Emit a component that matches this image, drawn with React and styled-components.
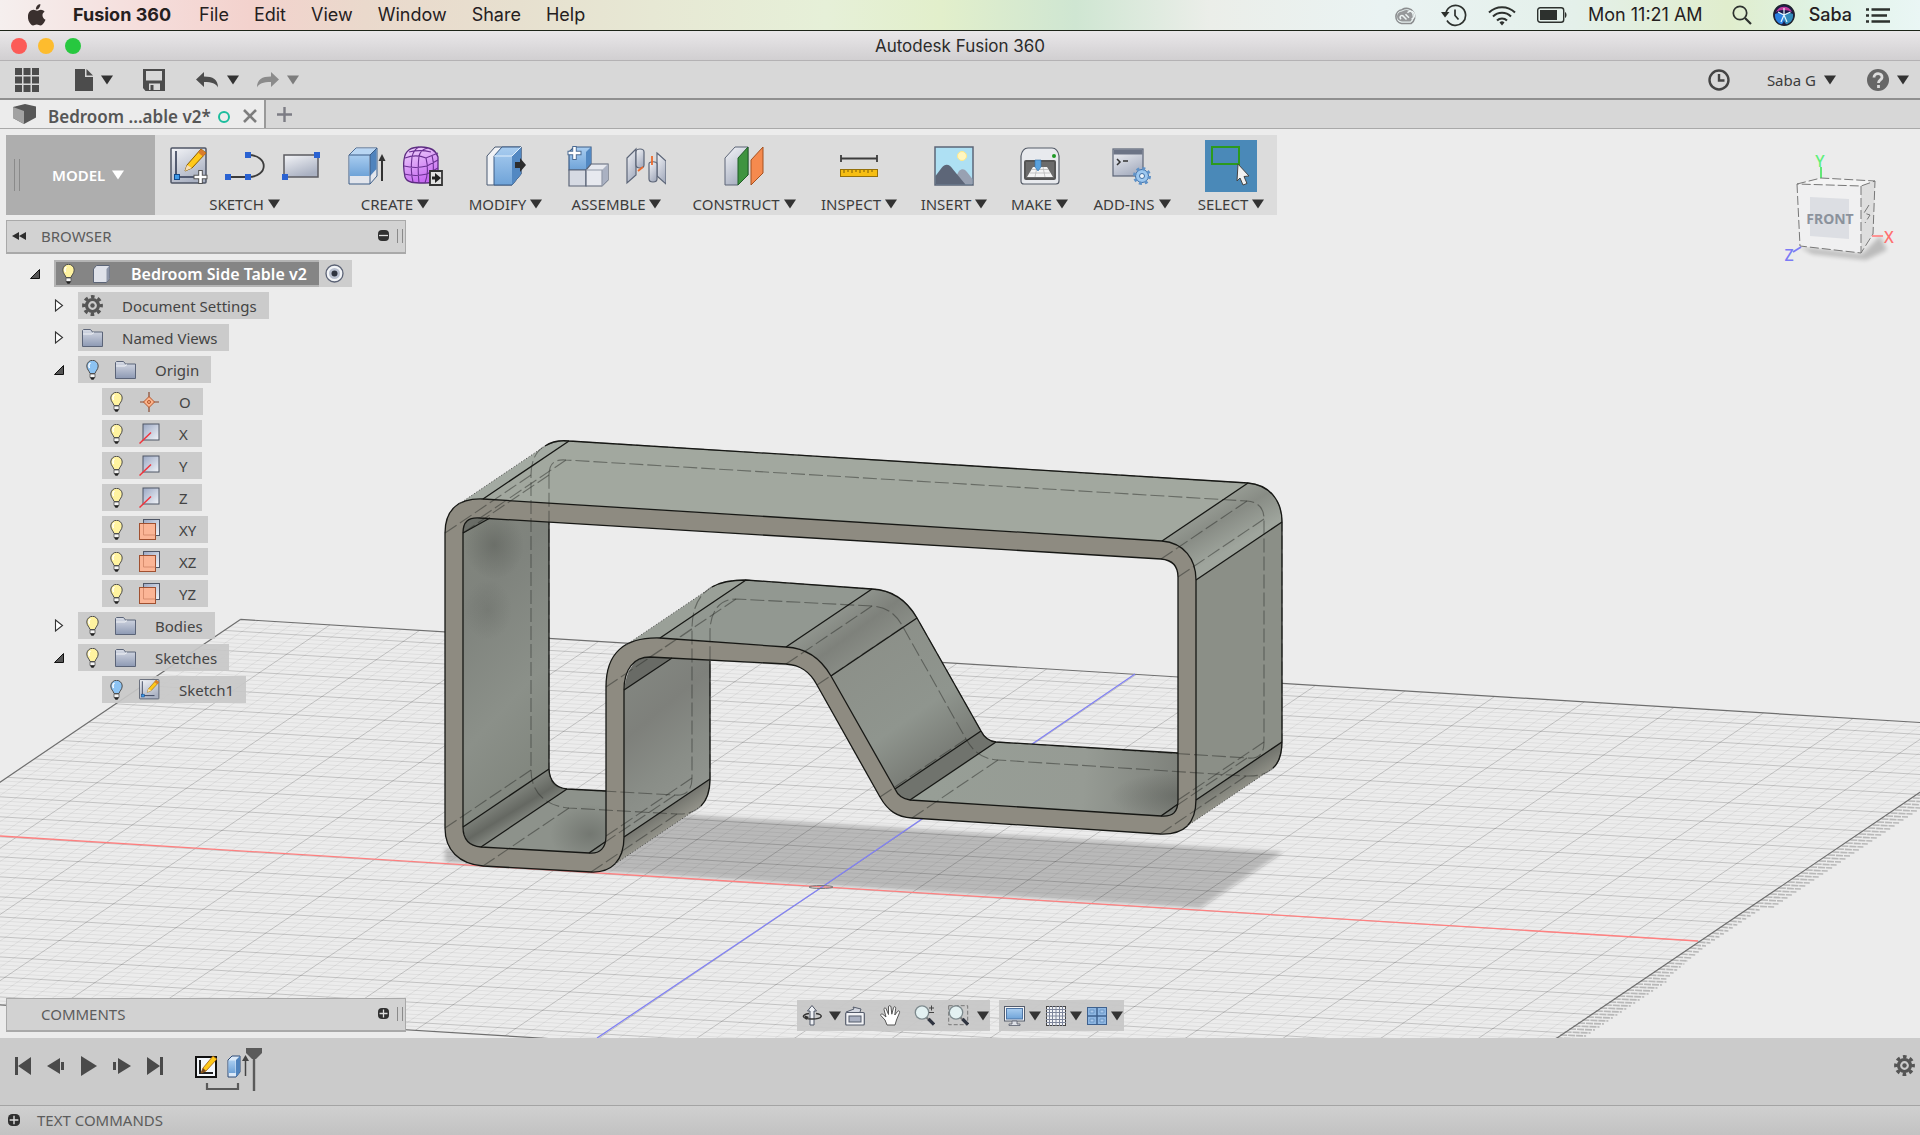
import React from 'react';
import styled, { createGlobalStyle, css } from 'styled-components';

const GlobalStyle = createGlobalStyle`
  * {
    box-sizing: border-box;
  }

  body {
    margin: 0;
    background: #ececec;
    color: #3c3c3c;
    font-family: 'Noto Sans', 'Open Sans', sans-serif;
    font-size: 15px;
  }

  button {
    margin: 0;
    padding: 0;
    border: 0;
    background: none;
    color: inherit;
    font: inherit;
    cursor: pointer;
  }

  ul {
    margin: 0;
    padding: 0;
    list-style: none;
  }

  svg {
    display: block;
    flex: none;
  }
`;

const Shell = styled.div`
  display: flex;
  flex-direction: column;
  height: 100vh;
  overflow: hidden;
`;

/* ---------- system menu bar ---------- */

const MenuBar = styled.nav`
  display: flex;
  align-items: center;
  flex: none;
  height: 31px;
  padding: 0 30px 0 28px;
  border-bottom: 1px solid #1c2418;
  background: linear-gradient(
    90deg,
    #f5efee 0%,
    #f5dcda 8%,
    #f3d2cd 13%,
    #ead9cc 19%,
    #e7e0cf 27%,
    #e7e8d4 34%,
    #e6f0d8 43%,
    #e2efcb 49%,
    #cfe6d2 56%,
    #ebeee9 63%,
    #eaf3f3 72%,
    #e4f0ea 82%,
    #e0edcd 90%,
    #dff3e6 95%,
    #eaf6f5 100%
  );
  color: #25201e;
  font-family: Inter, sans-serif;
  font-size: 18px;
  line-height: 24px;
`;

const MenuItem = styled.button`
  margin-left: ${({ $gap }) => $gap || 25}px;
  font-weight: ${({ $bold }) => ($bold ? 700 : 400)};
`;

const Status = styled.div`
  display: flex;
  align-items: center;
  gap: 21px;
  margin-left: auto;

  time {
    margin-right: 8px;
  }
`;

const StatusPair = styled.div`
  display: flex;
  align-items: center;
  gap: 14px;
  font-weight: 500;
`;

/* ---------- window chrome ---------- */

const TitleBar = styled.header`
  display: grid;
  grid-template-columns: 1fr auto 1fr;
  align-items: center;
  flex: none;
  height: 30px;
  padding: 0 11px;
  border-bottom: 1px solid #b4b2b4;
  background: linear-gradient(#e9e7e9, #d1cfd1);
  color: #2b2b2b;
  font-family: Inter, sans-serif;
  font-size: 17px;
  line-height: 24px;
`;

const Lights = styled.div`
  display: flex;
  gap: 11px;
`;

const Light = styled.button`
  width: 16px;
  height: 16px;
  border-radius: 50%;
  background: ${({ $color }) => $color};
`;

const AppBar = styled.div`
  display: flex;
  align-items: center;
  flex: none;
  height: 39px;
  padding: 0 11px 0 15px;
  border-bottom: 2px solid #8f8f8f;
  background: #d8d8d8;
`;

const BarButton = styled.button`
  display: flex;
  align-items: center;
  gap: 8px;
  margin-right: ${({ $after }) => $after || 0}px;
  color: ${({ $muted }) => ($muted ? '#8b8b8b' : '#3c3c3c')};
  font-size: 15px;
`;

const Spacer = styled.div`
  flex: 1;
`;

const TabStrip = styled.div`
  display: flex;
  flex: none;
  height: 29px;
  border-bottom: 1px solid #a9a9a9;
  background: #d7d7d7;
`;

const Tab = styled.div`
  display: flex;
  align-items: center;
  width: 266px;
  padding-left: 13px;
  border-right: 2px solid #999;
  background: #ececec;
  color: #565656;
  font-size: 17px;
  font-weight: 600;
  line-height: 24px;
  white-space: nowrap;

  span {
    width: 182px;
    padding: 5px 0 0 12px;
  }
`;

const TabDot = styled.i`
  flex: none;
  width: 12px;
  height: 12px;
  margin: 5px 13px 0 0;
  border: 2px solid #1bbd9d;
  border-radius: 50%;
`;

const NewTab = styled.button`
  padding-left: 11px;
`;

/* ---------- viewport ---------- */

const Viewport = styled.main`
  position: relative;
  display: flex;
  flex-direction: column;
  flex: 1;
  min-height: 0;
`;

const Canvas = styled.svg`
  position: absolute;
  inset: 0;
  width: 100%;
  height: 100%;
`;

const Ribbon = styled.div`
  position: relative;
  display: flex;
  align-self: flex-start;
  height: 80px;
  margin: 6px 0 0 6px;
  background: #dcdcdc;
`;

const Workspace = styled.button`
  display: flex;
  align-items: center;
  width: 149px;
  padding-left: 8px;
  background: #aeaeae;
  color: #fff;
  font-size: 15px;
  font-weight: 600;

  span {
    margin: 0 7px 0 32px;
  }
`;

const Grip = styled.i`
  width: 6px;
  height: ${({ $tall }) => ($tall ? 32 : 14)}px;
  border: solid #8a8a8a;
  border-width: 0 1px;
`;

const Section = styled.section`
  position: relative;
  display: flex;
  flex-direction: column;
  align-items: center;
  width: ${({ $width }) => $width}px;
  padding-top: 6px;

  & + &::before {
    content: '';
    position: absolute;
    top: 6px;
    left: 0;
    width: 1px;
    height: 68px;
    background: #b8b8b8;
  }
`;

const Icons = styled.div`
  display: flex;
  align-items: center;
  gap: 17px;
  height: 50px;
`;

const Tool = styled.button`
  ${({ $active }) =>
    $active &&
    css`
      height: 52px;
      padding: 6px;
      background: #4a89b8;
    `}
`;

const Label = styled.button`
  display: flex;
  align-items: center;
  gap: 4px;
  height: 20px;
  margin-top: 3px;
  font-size: 15px;
  line-height: 20px;
  white-space: nowrap;
`;

const Panel = styled.div`
  position: relative;
  display: flex;
  align-items: center;
  flex: none;
  width: 400px;
  height: 34px;
  margin: ${({ $bottom }) => ($bottom ? '0 0 6px 6px' : '5px 0 0 6px')};
  padding: 0 2px 2px 5px;
  border: 1px solid #a9a9a9;
  border-bottom-width: 2px;
  background: #d2d2d2;
  color: #5c5c5c;
  font-size: 15px;

  h2 {
    flex: 1;
    margin: 0 0 0 ${({ $bottom }) => ($bottom ? 29 : 15)}px;
    font: inherit;
  }

  i {
    margin-left: 8px;
  }
`;

const Tree = styled.ul`
  position: relative;
  display: flex;
  flex-direction: column;
  align-items: flex-start;
  gap: 5px;
  padding-top: 6px;
`;

const Row = styled.li`
  display: flex;
  align-items: center;
  height: 27px;
  padding-left: ${({ $level }) => 30 + 24 * $level}px;
`;

const Toggle = styled.span`
  width: 24px;
`;

const Chip = styled.button`
  display: flex;
  align-items: center;
  min-width: 100px;
  height: 27px;
  padding: 0 12px 0 4px;
  background: rgba(200, 200, 200, 0.9);
  color: #444;
  font-size: 15px;
  line-height: 26px;

  svg + svg {
    margin-left: 12px;
  }

  span {
    margin-left: 19px;
  }

  ${({ $root }) =>
    $root &&
    css`
      width: 265px;
      border: 2px solid #b4b4b4;
      border-width: 2px 0 2px 2px;
      padding-left: 2px;
      background: #858585;
      color: #fff;
      font-size: 16px;
      font-weight: 600;
      white-space: nowrap;
    `}
`;

const Eye = styled.button`
  display: grid;
  place-items: center start;
  width: 33px;
  height: 27px;
  padding-left: 6px;
  background: #cdcdcd;
`;

const Dock = styled.div`
  position: relative;
  display: grid;
  grid-template-columns: 1fr auto 1fr;
  align-items: start;
  margin-top: auto;
`;

const NavGroups = styled.div`
  display: flex;
  gap: 9px;
  padding-top: 2px;
`;

const NavGroup = styled.div`
  display: flex;
  align-items: center;
  gap: 4px;
  height: 31px;
  padding: 0 1px 0 5px;
  background: rgba(200, 200, 200, 0.96);
`;

const NavButton = styled.button`
  display: flex;
  align-items: center;
  gap: ${({ $gap }) => $gap || 2}px;
  margin-right: ${({ $after }) => $after || 0}px;
`;

/* ---------- timeline ---------- */

const Timeline = styled.footer`
  display: flex;
  flex: none;
  height: 68px;
  padding: 10px 5px 0 14px;
  border-bottom: 1px solid #a4a4a4;
  background: #cbcbcb;
`;

const Transport = styled.div`
  display: flex;
  gap: 15px;
  height: 36px;
  align-items: center;
  margin-right: 31px;
`;

const Settings = styled.button`
  height: 34px;
`;

const Commands = styled.div`
  display: flex;
  align-items: center;
  flex: none;
  gap: 17px;
  height: 29px;
  padding: 0 8px 2px;
  background: linear-gradient(#d0d0d0, #c2c2c2);
  color: #5c5c5c;
  font-size: 15px;
`;

/* ---------- icons ---------- */

const Caret = ({ fill = '#333', size = 12 }) => (
  <svg width={size} height="10" viewBox="0 0 12 10">
    <path d="M0 0.500h12L6 9.500z" fill={fill} />
  </svg>
);

const HiddenDefs = styled.svg`
  position: absolute;
`;

const Gradients = () => (
  <HiddenDefs width="0" height="0" aria-hidden="true">
    <defs>
      <linearGradient id="steel" x1="0" y1="0" x2="0.500" y2="1">
        <stop offset="0" stopColor="#f4f5f8" />
        <stop offset="1" stopColor="#aab1c2" />
      </linearGradient>
      <linearGradient id="steelUp" x1="0" y1="0" x2="1" y2="1">
        <stop offset="0" stopColor="#9ba8c4" />
        <stop offset="1" stopColor="#f2f4f8" />
      </linearGradient>
      <linearGradient id="blue" x1="0" y1="0" x2="0" y2="1">
        <stop offset="0" stopColor="#a9cdf0" />
        <stop offset="1" stopColor="#6fa3d8" />
      </linearGradient>
      <linearGradient id="violet" x1="0" y1="0" x2="0.400" y2="1">
        <stop offset="0" stopColor="#f0d8fb" />
        <stop offset="1" stopColor="#c86bf2" />
      </linearGradient>
      <linearGradient id="folder" x1="0" y1="0" x2="0" y2="1">
        <stop offset="0" stopColor="#d8dce6" />
        <stop offset="1" stopColor="#8d99b3" />
      </linearGradient>
    </defs>
  </HiddenDefs>
);

const AppleIcon = () => (
  <svg width="18" height="22" viewBox="0 0 18 22" fill="#3a302e">
    <path d="M12.300 0c.2 1.600-.4 2.900-1.200 3.900-.8 1-2 1.700-3.200 1.600-.2-1.400.5-2.800 1.200-3.700C10 .800 11.300.1 12.300 0z" />
    <path d="M17.500 15.800c-.5 1.200-.8 1.700-1.400 2.700-.9 1.400-2.200 3-3.700 3-1.400 0-1.700-.9-3.600-.9s-2.300.9-3.700.9c-1.500 0-2.700-1.500-3.600-2.900C-.8 14.900-.5 10 1.700 7.600 2.700 6.500 4.100 5.800 5.500 5.800c1.500 0 2.400.9 3.700.9 1.200 0 2-.9 3.700-.9 1.300 0 2.700.7 3.700 1.900-3.200 1.800-2.700 6.500.9 8.100z" />
  </svg>
);

const CloudIcon = () => (
  <svg width="26" height="20" viewBox="0 0 26 20" fill="none">
    <path d="M7.500 18.500A7 7 0 0 1 8 4.700 8.200 8.200 0 1 1 17 18.500z" stroke="#8b8d8f" strokeWidth="1.600" />
    <path d="M8 16.500a5 5 0 0 1 0-10A6.400 6.400 0 1 1 16.500 16.500z" fill="#96989a" />
    <path d="M12.500 14.500L8.700 10.700a1.800 1.800 0 1 0-1.500 3.300M11.500 9.200l3.500 3.500M17.500 14a3.900 3.900 0 1 0-4-6.200" stroke="#edf3f3" strokeWidth="1.500" />
  </svg>
);

const TimeMachineIcon = () => (
  <svg width="26" height="24" viewBox="0 0 26 24" fill="none" stroke="#2d312e" strokeWidth="1.700">
    <path d="M5 9.500A10 10 0 1 1 6 17.500M14 6.500v6l3.500 4" />
    <path d="M0 9h8.500l-4.500 5.500z" fill="#2d312e" stroke="none" />
  </svg>
);

const WifiIcon = () => (
  <svg width="28" height="21" viewBox="0 0 28 21" fill="none" stroke="#2d312e" strokeWidth="2">
    <path d="M1 7.500a18.500 18.500 0 0 1 26 0M5 11.500a12.800 12.800 0 0 1 18 0M9 15.500a7 7 0 0 1 10 0" />
    <path d="M11.500 17.500a3.600 3.600 0 0 1 5 0L14 20.500z" fill="#2d312e" stroke="none" />
  </svg>
);

const BatteryIcon = () => (
  <svg width="30" height="16" viewBox="0 0 30 16">
    <rect x="0.700" y="0.700" width="26" height="14.600" rx="2.500" fill="none" stroke="#2d312e" strokeWidth="1.400" />
    <rect x="3" y="3" width="17" height="10" fill="#2d312e" />
    <path d="M28 5c2 1 2 5 0 6z" fill="#2d312e" />
  </svg>
);

const SearchIcon = () => (
  <svg width="20" height="20" viewBox="0 0 20 20" fill="none" stroke="#2d312e">
    <circle cx="8" cy="8" r="6.700" strokeWidth="1.700" />
    <path d="M13 13l6 6" strokeWidth="2.200" />
  </svg>
);

const SiriIcon = () => (
  <svg width="22" height="22" viewBox="0 0 22 22">
    <circle cx="11" cy="11" r="10.500" fill="#1c1b4a" />
    <path d="M3 8C6 1 16 1 19 8c-4-2-11-3-16 0z" fill="#c23a9c" />
    <path d="M2 10c4-2 8-1 9 2 1 4-1 8-3 8.500-4-1.500-6.500-5-6-10.500z" fill="#2a7fe0" />
    <path d="M20 10c-4-2-8-1-9 2-1 4 1 8 3 8.500 4-1.500 6.500-5 6-10.500z" fill="#39a9d8" opacity="0.800" />
    <path d="M11 11L5 8M11 11l6.500-3M11 11l-3 7M11 11l3 7M11 11V4" stroke="#e4f7ff" strokeWidth="1.200" />
    <circle cx="11" cy="11" r="10.300" fill="none" stroke="#22252e" strokeWidth="1.200" />
  </svg>
);

const ListIcon = () => (
  <svg width="24" height="15" viewBox="0 0 24 15" stroke="#2d312e" strokeWidth="2.400">
    <path d="M0 1.500h3M5.500 1.500H24M0 7.500h3M5.500 7.500H21M0 13.500h3M5.500 13.500H24" />
  </svg>
);

const AppsIcon = () => (
  <svg width="24" height="24" viewBox="0 0 24 24" fill="#4c4c4c">
    {[0, 8.5, 17].map(y => [0, 8.5, 17].map(x => <rect key={`${x}-${y}`} x={x} y={y} width="7" height="7" />))}
  </svg>
);

const FileIcon = () => (
  <svg width="18" height="22" viewBox="0 0 18 22" fill="#4c4c4c">
    <path d="M0 0h10v8h8v14H0z" />
    <path d="M11.500 0L18 6.500h-6.500z" />
  </svg>
);

const SaveIcon = () => (
  <svg width="22" height="22" viewBox="0 0 22 22">
    <path d="M0 0h22v22H2.500L0 19z" fill="#4c4c4c" />
    <path d="M3 2h16v9.500H3zM6 14.500h11V21H6z" fill="#d8d8d8" />
    <path d="M7.500 16h3v5h-3z" fill="#4c4c4c" />
  </svg>
);

const UndoIcon = ({ fill = '#4c4c4c', flip }) => (
  <svg width="23" height="16" viewBox="0 0 23 16">
    <path
      d="M0 7.500L8 0v4.500c9 0 14 3 14 11-2-4-6-5.500-14-5.500v5z"
      fill={fill}
      transform={flip ? 'translate(23 0) scale(-1 1)' : undefined}
    />
  </svg>
);

const ClockIcon = () => (
  <svg width="22" height="22" viewBox="0 0 22 22" fill="none" stroke="#444" strokeWidth="2.400">
    <circle cx="11" cy="11" r="9.500" />
    <path d="M11 5v6.500h5.500" />
  </svg>
);

const HelpIcon = () => (
  <svg width="22" height="22" viewBox="0 0 22 22">
    <circle cx="11" cy="11" r="11" fill="#666" />
    <path d="M7 8.500c0-5.500 8.500-5 8 0-.3 2.500-3.500 2.500-3.500 5.500M11.500 16v3" fill="none" stroke="#dcdcdc" strokeWidth="2.800" />
  </svg>
);

const TabCubeIcon = () => (
  <svg width="23" height="20" viewBox="0 0 23 20">
    <path d="M0 3L12 0l11 2.500v11L11 20 0 14z" fill="#575757" />
    <path d="M0 3l11 4v13L0 14z" fill="#a2a2a2" />
  </svg>
);

const SketchIcon = ({ size = 38, plus = true }) => (
  <svg width={size} height={size} viewBox="0 0 38 38">
    <rect x="1" y="1" width="35" height="35" rx="1" fill="url(#steel)" stroke="#4f5666" strokeWidth="1.500" />
    <path d="M6 4v26h22" fill="none" stroke="#333c55" strokeWidth="1.600" />
    <rect x="4.500" y="27.500" width="5" height="5" fill="#3f9ae8" stroke="#124a8d" />
    <path d="M17 18L31 2l5 4-14 15-7 3z" fill="#ffc91a" stroke="#8b5c00" />
    <path d="M17 18l5 3-7 3z" fill="#f5deb5" />
    <path d="M31 2l5 4-3 3.500-5-4z" fill="#d97c2d" />
    {plus && <path d="M30.500 23v14M23.500 30h14" stroke="#555" strokeWidth="4.600" />}
    {plus && <path d="M30.500 24v12M24.500 30h12" stroke="#fff" strokeWidth="2.600" />}
  </svg>
);

const LineIcon = () => (
  <svg width="40" height="28" viewBox="0 0 40 28">
    <path d="M3 25h20c21 0 21-22 0-22" fill="none" stroke="#3c3c3c" strokeWidth="1.800" />
    <path d="M0 22h6v6H0zM20 22h6v6h-6zM20 0h6v6h-6z" fill="#2a62d2" />
  </svg>
);

const RectIcon = () => (
  <svg width="38" height="28" viewBox="0 0 38 28">
    <rect x="2" y="3" width="34" height="22" fill="url(#steel)" stroke="#5b5b60" strokeWidth="1.500" />
    <path d="M0 22h6v6H0zM32 0h6v6h-6z" fill="#2a62d2" />
  </svg>
);

const ExtrudeIcon = () => (
  <svg width="38" height="38" viewBox="0 0 38 38">
    <path d="M1 8l7-7h21v28l-7 8H1z" fill="#e2e5ec" stroke="#3d5d86" />
    <path d="M1.500 8h20v21h-20z" fill="url(#blue)" />
    <path d="M1.500 8L8 1.500h20.500L22 8z" fill="#b9d6f3" />
    <path d="M22 8l6.500-6.500V22L22 29z" fill="#4f83bd" />
    <path d="M22 8v29M1 8h21M22 8l7-7" fill="none" stroke="#3d5d86" />
    <path d="M34 34V10" stroke="#333" strokeWidth="2" />
    <path d="M30.500 14L34 7l3.500 7z" fill="#333" />
  </svg>
);

const FormIcon = () => (
  <svg width="40" height="40" viewBox="0 0 40 40" fill="none">
    <path d="M1 14C2 4 8 1 18 1s15 3 17 10v20c-2 5-6 6-14 6-10 0-17 0-19-6C1 26 0 20 1 14z" fill="url(#violet)" stroke="#5c2c80" strokeWidth="1.300" />
    <path d="M2 12c8-3 14-3 21 0l12-5M23 12c2 8 2 17-1 25M9 11c-1 8-1 17 1 25M16 10c-1 8-1 18 0 27M1 20c8 2 15 2 23 0l11-6M1 28c8 2 15 2 23 0l11-6M9 11c1-5 3-8 7-10M16 10c1-4 4-7 9-8M29 9c2 8 2 17-1 26M6 6c8-2 14-2 22 0" stroke="#6a3192" strokeWidth="1.100" />
    <path d="M27 25h12v14H27z" fill="#e2e2e2" stroke="#333" strokeWidth="1.800" />
    <path d="M29 32h4" stroke="#222" strokeWidth="3" />
    <path d="M32 27l6 5-6 5z" fill="#222" />
  </svg>
);

const PressPullIcon = () => (
  <svg width="40" height="40" viewBox="0 0 40 40">
    <path d="M1 10l8-9h26v27l-9 11H1z" fill="#f1f3f6" stroke="#4a5a72" />
    <path d="M8 10l8-9h19v27l-9 11H8z" fill="url(#blue)" stroke="#3d5d86" />
    <path d="M26 10l9-9v27l-9 11z" fill="#5288c2" />
    <path d="M8 10h18l9-9" fill="none" stroke="#e1effb" />
    <path d="M29 16h5v-4l6 7-6 7v-4h-5z" fill="#2d2d2d" />
  </svg>
);

const ComponentIcon = () => (
  <svg width="42" height="42" viewBox="0 0 42 42" strokeWidth="1.200">
    <path d="M2 7l5-5h17v18l-5 5H2z" fill="url(#blue)" stroke="#3d5d86" />
    <path d="M19 7l5-5v18l-5 5z" fill="#5288c2" />
    <path d="M2 25h17v16H2z" fill="#d6dae3" stroke="#5c6577" />
    <path d="M19 25l5-6h17v16l-6 6H19z" fill="#e7e9ef" stroke="#5c6577" />
    <path d="M35 25l6-6v16l-6 6z" fill="#aab1c2" />
    <path d="M19 25h16v16" fill="none" stroke="#9299a8" />
    <path d="M7.500 1v14M0.500 8h14" stroke="#4a6a92" strokeWidth="4.400" />
    <path d="M7.500 2v12M1.500 8h12" stroke="#fff" strokeWidth="2.600" />
  </svg>
);

const JointIcon = () => (
  <svg width="40" height="38" viewBox="0 0 40 38" strokeWidth="1.200">
    <path d="M1 11L10 2v26l-9 8z" fill="url(#steel)" stroke="#5c6577" />
    <path d="M10 5c0-4 8-4 8 0v13c0 4-8 4-8 0z" fill="url(#steel)" stroke="#5c6577" />
    <path d="M31 6l9 8v23l-9-8z" fill="url(#steel)" stroke="#5c6577" />
    <path d="M23 17c0-3 8-3 8 0v15c0 4-8 4-8 0z" fill="url(#steel)" stroke="#5c6577" />
    <path d="M17 20l-5 4m14-15v9" stroke="#ee6a2c" strokeWidth="1.800" />
  </svg>
);

const PlaneIcon = () => (
  <svg width="40" height="40" viewBox="0 0 40 40">
    <path d="M1 12L11 1h13v28L14 39H1z" fill="url(#steel)" stroke="#5c6577" />
    <path d="M14 12L24 1v28L14 39z" fill="#3f9440" stroke="#1f5e26" />
    <path d="M27 14L39 1v26L27 39z" fill="#f58a4e" stroke="#a5511f" />
  </svg>
);

const MeasureIcon = () => (
  <svg width="38" height="22" viewBox="0 0 38 22">
    <path d="M1 0v7M37 0v7M1 3.500h36" stroke="#3c3c3c" strokeWidth="1.800" />
    <rect x="0.500" y="14.500" width="37" height="7" fill="#f6be12" stroke="#94700a" />
    <path d="M4 15v3M8 15v2M12 15v3M16 15v2M20 15v3M24 15v2M28 15v3M32 15v2" stroke="#7a5c08" />
  </svg>
);

const PictureIcon = () => (
  <svg width="40" height="40" viewBox="0 0 40 40">
    <rect x="1" y="1" width="38" height="38" fill="#aee0f3" stroke="#5c6577" strokeWidth="1.500" />
    <circle cx="28" cy="10" r="4.500" fill="#fff6c0" stroke="#ffe98a" />
    <path d="M18 38l7-13c3-3 6-2 8 1l5.500 7v5z" fill="#98a1b2" />
    <path d="M1.500 30l6-8c4-5 8-4 12 2l12 14.500h-30z" fill="#5d6678" />
  </svg>
);

const PrinterIcon = () => (
  <svg width="40" height="38" viewBox="0 0 40 38">
    <path d="M1 9c1-6 3-8 7-8h24c4 0 6 2 7 8v25c0 2-1 3-3 3H4c-2 0-3-1-3-3z" fill="#e8eaee" stroke="#555c68" strokeWidth="1.200" />
    <rect x="4" y="13" width="32" height="20" rx="2" fill="#555" />
    <rect x="6" y="15" width="28" height="16" fill="#6b6b6b" />
    <path d="M13 20h14l6 10H7z" fill="#f4f4f4" />
    <path d="M12 22.500h16M10 26h20M17 20l-2 10M23 20l2 10" stroke="#b9b9b9" strokeWidth="0.800" />
    <path d="M15 13h6v7l-3 4-3-4z" fill="#5aa2de" stroke="#2f6ea8" strokeWidth="0.600" />
    <circle cx="34" cy="9" r="2" fill="#1f9a26" />
  </svg>
);

const ScriptIcon = () => (
  <svg width="40" height="38" viewBox="0 0 40 38">
    <rect x="1" y="2" width="30" height="27" fill="url(#steel)" stroke="#5c6577" strokeWidth="1.200" />
    <rect x="1.500" y="2.500" width="29" height="5" fill="#6c7486" />
    <path d="M5 12l3 3-3 3M11 14h5" fill="none" stroke="#333" strokeWidth="1.500" />
    <circle cx="30" cy="29" r="6.500" fill="#9cc7ef" stroke="#3f6fa5" />
    <circle cx="30" cy="29" r="7.500" fill="none" stroke="#5f92c8" strokeWidth="3" strokeDasharray="3 2.900" />
    <circle cx="30" cy="29" r="2.500" fill="#eef5fc" stroke="#3f6fa5" />
  </svg>
);

const SelectIcon = () => (
  <svg width="40" height="40" viewBox="0 0 40 40">
    <rect x="1" y="1" width="27" height="17" fill="none" stroke="#2c9a1c" strokeWidth="2" />
    <path d="M27 18l11 12-5 .5 3 7-4 1.500-3-7-3 3z" fill="#f1f1f1" stroke="#444" />
  </svg>
);

const RoundSign = ({ plus, size = 11 }) => (
  <svg width={size} height={size} viewBox="0 0 11 11">
    <rect width="11" height="11" rx="4" fill="#303030" />
    <path d={plus ? 'M5.500 1.500v8M1.500 5.500h8' : 'M1 5.500h9'} stroke="#ddd" strokeWidth="1.300" />
  </svg>
);

const CollapseIcon = () => (
  <svg width="14" height="8" viewBox="0 0 14 8" fill="#2d2d2d">
    <path d="M7 0v8L0 4zM14 0v8L7 4z" />
  </svg>
);

const OpenArrow = () => (
  <svg width="10" height="10" viewBox="0 0 10 10">
    <path d="M9.500 0.500v9h-9z" fill="#555" stroke="#111" />
  </svg>
);

const ClosedArrow = () => (
  <svg width="10" height="13" viewBox="0 0 10 13">
    <path d="M1.500 1L8.500 6.500 1.500 12z" fill="#fff" stroke="#333" strokeWidth="1.100" />
  </svg>
);

const Bulb = ({ off }) => (
  <svg width="21" height="20" viewBox="0 0 21 20">
    <path d="M8 13.500C7.500 11 4.800 9.500 4.800 6a5.700 5.700 0 0 1 11.400 0c0 3.500-2.700 5-3.200 7.500z" fill={off ? '#8cc3f3' : '#fff3a0'} stroke="#4c4c4c" />
    <path d="M8.500 3C7 4 6.500 6 7.500 8" fill="none" stroke="#fff" strokeWidth="1.400" />
    <path d="M8 14h5v3.500H8z" fill="#f5f5f5" stroke="#555" strokeWidth="0.800" />
    <path d="M8 17.500h5l-1.500 2.300h-2z" fill="#222" />
  </svg>
);

const Folder = () => (
  <svg width="21" height="18" viewBox="0 0 21 18">
    <path d="M0.500 17.500v-16l1-1h7l2 2.500h10v14.500z" fill="url(#folder)" stroke="#5b6478" />
    <path d="M1 5h9l2-1.500" fill="none" stroke="#f0f2f6" />
  </svg>
);

const Gear = ({ size = 21 }) => (
  <svg width={size} height={size} viewBox="0 0 21 21" fill="none" stroke="#555">
    <circle cx="10.500" cy="10.500" r="8.700" strokeWidth="3.400" strokeDasharray="3.600 3.230" strokeDashoffset="1.800" />
    <circle cx="10.500" cy="10.500" r="6" strokeWidth="3.200" />
    <circle cx="10.500" cy="10.500" r="2.200" fill="#555" stroke="none" />
  </svg>
);

const Body = () => (
  <svg width="21" height="18" viewBox="0 0 21 18">
    <path d="M2.500 4l3-3.500h13v13l-3 4h-13z" fill="#dfe2ea" stroke="#5c6577" />
    <path d="M15.500 4l3-3.500v13l-3 4z" fill="#8d95a8" />
  </svg>
);

const OriginPoint = () => (
  <svg width="21" height="20" viewBox="0 0 21 20">
    <path d="M10 0v20M1 10h19" stroke="#8a4a30" strokeWidth="1.200" />
    <path d="M10 4.500l5.500 5.500-5.500 5.500L4.500 10z" fill="#fbb48c" stroke="#b5562c" />
    <circle cx="10" cy="10" r="1.500" fill="none" stroke="#b5562c" />
  </svg>
);

const Axis = () => (
  <svg width="21" height="21" viewBox="0 0 21 21">
    <rect x="4" y="1" width="16" height="16" fill="url(#steelUp)" stroke="#4f5666" />
    <path d="M0.500 20.500L12 9.500" stroke="#f0343c" strokeWidth="1.500" />
  </svg>
);

const PlaneGlyph = () => (
  <svg width="21" height="21" viewBox="0 0 21 21">
    <rect x="4.500" y="0.500" width="16" height="16" fill="url(#steelUp)" stroke="#4f5666" />
    <rect x="0.500" y="4.500" width="16" height="16" fill="#fbb596" stroke="#a05030" />
    <path d="M4.500 5v11h12" fill="none" stroke="#cf8465" strokeWidth="0.800" />
  </svg>
);

const EyeTarget = () => (
  <svg width="19" height="19" viewBox="0 0 19 19">
    <circle cx="9.500" cy="9.500" r="8.500" fill="#f2f4f7" stroke="#5b6275" strokeWidth="1.300" />
    <circle cx="9.500" cy="9.500" r="5.500" fill="#b9c0d0" />
    <circle cx="9.500" cy="9.500" r="3" fill="#2f3440" />
  </svg>
);

const OrbitIcon = () => (
  <svg width="20" height="21" viewBox="0 0 20 21" fill="none" stroke="#4f5666">
    <path d="M8 20V6H5.500L10 0.500 14.500 6H12v14z" fill="#eef0f4" />
    <path d="M7 8.500c-8 1-8 5.500 3 5.500s12-4.500 4-5.500" strokeWidth="1.300" stroke="#333" />
    <path d="M2 10l2 5 3-3z" fill="#333" stroke="none" />
  </svg>
);

const LookAtIcon = () => (
  <svg width="20" height="20" viewBox="0 0 20 20" stroke="#555c6b">
    <path d="M1 6l8-3-1-2 8 2-1 3" fill="#d3d7e0" />
    <rect x="0.700" y="6.500" width="18.600" height="12.500" rx="1" fill="#f2f3f6" strokeWidth="1.200" />
    <rect x="4" y="10" width="12" height="6" fill="#aab1c2" />
  </svg>
);

const HandIcon = () => (
  <svg width="21" height="21" viewBox="0 0 21 21">
    <path d="M7 20L5 15 .8 10.500c-.5-1.500 1-2 2-1.200L6 12 4 4.500c-.3-1.800 1.700-2.200 2.200-.6L8.500 9.500 8.500 2c0-1.900 2.300-1.900 2.500 0l.8 7.200 1.700-6.500c.5-1.700 2.500-1.200 2.200.6L14.800 10l2.700-3.500c1-1.300 2.700-.4 2 1.200L16.500 15 15 20z" fill="#fff" stroke="#555" />
  </svg>
);

const ZoomIcon = ({ fit }) => (
  <svg width="21" height="21" viewBox="0 0 21 21" fill="none">
    {fit && <rect x="0.700" y="0.700" width="19" height="19" stroke="#777" strokeDasharray="4 2" />}
    <path d="M12 12l3 3" stroke="#777" strokeWidth="2" />
    <path d="M14.500 14l5.500 5.500" stroke="#2f3440" strokeWidth="3.200" />
    <circle cx="8" cy="7.500" r="6.700" fill="#e3f1f2" stroke="#7e8a8e" strokeWidth="1.300" />
    {!fit && <path d="M17.500 0.500v5M15 3h5M15 7.500h5" stroke="#444" />}
  </svg>
);

const DisplayIcon = () => (
  <svg width="21" height="20" viewBox="0 0 21 20">
    <rect x="0.500" y="0.500" width="20" height="14.500" fill="#f4f5f7" stroke="#555c6b" />
    <rect x="2.500" y="2.500" width="16" height="10.500" fill="url(#blue)" stroke="#4f75a5" />
    <path d="M8 15h5v3h3v1.500H5V18h3z" fill="#dfe2e8" stroke="#555c6b" strokeWidth="0.800" />
  </svg>
);

const GridIcon = () => (
  <svg width="20" height="20" viewBox="0 0 20 20">
    <rect x="0.500" y="0.500" width="19" height="19" fill="#f3f4f7" stroke="#444" />
    <path d="M3.500 0v20M6.500 0v20M10 0v20M13.500 0v20M16.500 0v20M0 3.500h20M0 6.500h20M0 10h20M0 13.500h20M0 16.500h20" stroke="#7d859a" />
  </svg>
);

const PanesIcon = () => (
  <svg width="20" height="18" viewBox="0 0 20 18">
    <rect x="0.500" y="0.500" width="19" height="17" fill="#8db6e2" stroke="#3e618f" />
    <path d="M10 0v18M0 9h20" stroke="#3e618f" strokeWidth="1.500" />
    <path d="M3 3h4v3H3zM13 3h4v3h-4zM3 12h4v3H3zM13 12h4v3h-4z" fill="#a9c9ed" stroke="#6d97c6" />
  </svg>
);

const TransportIcon = ({ d, width = 18 }) => (
  <svg width={width} height="20" viewBox={`0 0 ${width} 20`} fill="#4a4a4a">
    <path d={d} />
  </svg>
);

const HistoryGraph = () => (
  <svg width="72" height="46" viewBox="0 0 72 46">
    <rect x="1" y="9" width="20" height="20" fill="#f4f8fc" stroke="#111" strokeWidth="2" />
    <path d="M5 12v13h13" fill="none" stroke="#222" strokeWidth="2" />
    <path d="M8 20L18 8l4 3-11 12-5 2z" fill="#ffc91a" stroke="#9a5c10" strokeWidth="0.800" />
    <path d="M6 25l2-5 3 3z" fill="#7a4a20" />
    <path d="M33 12l4-4h8v16l-4 5h-8z" fill="#dbe9f8" stroke="#2c4a76" />
    <path d="M33.500 12.500h7V25h-7z" fill="url(#blue)" />
    <path d="M41 12l4-4v16l-4 5z" fill="#4f83bd" />
    <path d="M50.500 28V12" stroke="#444" strokeWidth="1.500" />
    <path d="M47 13l3.500-6 3.500 6z" fill="#444" />
    <path d="M12 35v6h31v-6" fill="none" stroke="#5a5a5a" strokeWidth="2.200" />
    <path d="M51 0h16v5l-6 6h-4l-6-6z" fill="#5a5a5a" />
    <path d="M59 8v35" stroke="#5a5a5a" strokeWidth="2.400" />
  </svg>
);

/* ---------- 3D scene ---------- */

// ground plane basis: one major cell along x and one along z
const ORIGIN = [822, 887.3];
const U = [89.6, 5.5];
const V = [27.1, -18.35];
const U_MIN = -10;
const U_MAX = 9.8;
const V_MIN = -8.4;
const V_MAX = 11.6;

const at = (u, v) => [ORIGIN[0] + u * U[0] + v * V[0], ORIGIN[1] + u * U[1] + v * V[1]];
const segment = (a, b) => `M${a[0].toFixed(1)} ${a[1].toFixed(1)}L${b[0].toFixed(1)} ${b[1].toFixed(1)}`;

const gridPath = major => {
  const out = [];
  for (let i = -50; i <= 60; i++) {
    if ((i % 5 === 0) !== major) continue;
    const t = i / 5;
    if (t > U_MIN && t < U_MAX) out.push(segment(at(t, V_MIN), at(t, V_MAX)));
    if (t > V_MIN && t < V_MAX) out.push(segment(at(U_MIN, t), at(U_MAX, t)));
  }
  return out.join('');
};

// aliasing fringe past the right edge of the ground plane
const fringePath = () => {
  const out = [];
  for (let y = 792; y < 1040; y += 3) {
    const x = 1698 - (y - 941) / 0.672;
    const width = y < 908 ? 24 : y < 945 ? 14 : y < 980 ? 14 + (y - 945) / 3.5 : 28;
    out.push(segment([x + 2, y], [x + width, y + 1]));
  }
  return out.join('');
};

const OUTER =
  'M445 533C445 509 459 498 483 499L1162 541C1184 543 1196 559 1196 580V799C1196 824 1184 835 1160 834L912 818C897 817 888 811 880 797L817 685C810 672 801 665 786 664L650 657C634 657 624 669 624 690V837C624 861 611 873 591 872L483 866C459 864 445 850 445 828Z';
const INNER =
  'M463 533C463 522 468 517 480 518L1161 559C1172 560 1178 566 1178 577V800C1178 812 1173 817 1161 816L910 800C903 799 898 796 895 789L831 676C820 657 806 648 786 647L660 638C624 637 606 653 606 687V836C606 848 600 854 589 853L481 847C469 846 463 840 463 827Z';

const sweep = points => points.map(([x, y]) => `M${x} ${y}l86 -58`).join('');

const CREASES = sweep([
  [445, 533], [480, 518], [463, 533], [1161, 559], [1178, 577], [606, 687], [650, 657], [786, 664],
  [817, 685], [880, 797], [912, 818], [1160, 834], [1161, 816], [1178, 800], [591, 872], [589, 853],
  [606, 836], [483, 866], [445, 828],
]);

const EDGES = sweep([
  [483, 499], [1162, 541], [1196, 580], [1196, 800], [463, 827], [481, 847], [660, 638],
  [786, 647], [831, 676], [895, 789], [910, 800], [624, 837],
]);

const Scene = () => (
  <Canvas viewBox="0 129 1920 909" preserveAspectRatio="xMinYMin slice" role="img" aria-label="Bedroom Side Table model">
    <defs>
      <linearGradient id="wall" x1="0" y1="0" x2="0.300" y2="1">
        <stop offset="0" stopColor="#81857d" />
        <stop offset="0.300" stopColor="#7f837d" />
        <stop offset="0.700" stopColor="#8b9089" />
        <stop offset="1" stopColor="#81867e" />
      </linearGradient>
      <linearGradient id="legWall" x1="0" y1="0" x2="0.400" y2="1">
        <stop offset="0" stopColor="#858983" />
        <stop offset="0.400" stopColor="#7e807b" />
        <stop offset="0.700" stopColor="#898d87" />
        <stop offset="1" stopColor="#929690" />
      </linearGradient>
      <linearGradient id="floorRight" gradientUnits="userSpaceOnUse" x1="930" y1="780" x2="1185" y2="800">
        <stop offset="0" stopColor="#979e96" />
        <stop offset="0.600" stopColor="#969b94" />
        <stop offset="1" stopColor="#7c7f79" />
      </linearGradient>
      <linearGradient id="bend" gradientUnits="userSpaceOnUse" x1="1185" y1="515" x2="1212" y2="560">
        <stop offset="0" stopColor="#9a9f97" />
        <stop offset="0.450" stopColor="#888c85" />
        <stop offset="1" stopColor="#9fa59d" />
      </linearGradient>
      <linearGradient id="humpBend" gradientUnits="userSpaceOnUse" x1="830" y1="610" x2="868" y2="662">
        <stop offset="0" stopColor="#939891" />
        <stop offset="0.500" stopColor="#7e817b" />
        <stop offset="1" stopColor="#8d918a" />
      </linearGradient>
      <linearGradient id="slope" gradientUnits="userSpaceOnUse" x1="860" y1="650" x2="940" y2="765">
        <stop offset="0" stopColor="#8c9089" />
        <stop offset="0.600" stopColor="#8f958e" />
        <stop offset="1" stopColor="#777a74" />
      </linearGradient>
      <linearGradient id="innerBend" gradientUnits="userSpaceOnUse" x1="500" y1="798" x2="516" y2="824">
        <stop offset="0" stopColor="#82867f" />
        <stop offset="0.600" stopColor="#656862" />
        <stop offset="1" stopColor="#81857e" />
      </linearGradient>
      <linearGradient id="under" gradientUnits="userSpaceOnUse" x1="660" y1="808" x2="672" y2="826">
        <stop offset="0" stopColor="#6e6f69" />
        <stop offset="1" stopColor="#94948b" />
      </linearGradient>
      <linearGradient id="underRight" gradientUnits="userSpaceOnUse" x1="1235" y1="774" x2="1246" y2="792">
        <stop offset="0" stopColor="#74766f" />
        <stop offset="1" stopColor="#99998f" />
      </linearGradient>
      <radialGradient id="smudge">
        <stop offset="0" stopColor="#4d504b" stopOpacity="0.400" />
        <stop offset="1" stopColor="#4d504b" stopOpacity="0" />
      </radialGradient>
      <clipPath id="leftFloor">
        <path d="M481 847L567 789L606 791V853Z" />
      </clipPath>
      <clipPath id="rightFloor">
        <path d="M910 800L996 742L1178 753V817Z" />
      </clipPath>
      <filter id="soft" x="-5%" y="-20%" width="110%" height="140%">
        <feGaussianBlur stdDeviation="2" />
      </filter>
    </defs>

    <rect x="0" y="129" width="1920" height="909" fill="#ececec" />
    <path d="M687 815L1283 852L1200 908L445 862V848L520 858Z" fill="#000" opacity="0.210" filter="url(#soft)" />
    <path d={gridPath(false)} stroke="#000" strokeOpacity="0.060" />
    <path d={gridPath(true)} stroke="#000" strokeOpacity="0.180" />
    <path d={fringePath()} stroke="#8e8e8e" strokeOpacity="0.550" strokeWidth="1.600" strokeDasharray="7 1" />
    <path
      d={segment(at(U_MIN, V_MAX), at(U_MAX + 1, V_MAX)) + segment(at(U_MIN, V_MAX), at(U_MIN, V_MIN)) + segment(at(U_MAX, V_MAX), at(U_MAX, V_MIN)) + segment(at(U_MIN, V_MIN), at(U_MAX, V_MIN))}
      stroke="#6e6e6e"
      strokeWidth="1.200"
    />
    <path d="M0 836L1698 941" stroke="#ff8080" strokeWidth="1.300" />
    <path d="M1135 674L822 887L597 1038" stroke="#8080f4" strokeWidth="1.300" fill="none" />
    <ellipse cx="821" cy="887" rx="12" ry="1.500" fill="none" stroke="#777" />

    {/* surfaces seen through the opening */}
    <path d="M463 515H549V769L463 827Z" fill="url(#wall)" />
    <path d="M463 533V515H494Z" fill="#6a6d67" />
    <ellipse cx="494" cy="545" rx="30" ry="34" fill="url(#smudge)" />
    <ellipse cx="488" cy="610" rx="24" ry="30" fill="url(#smudge)" opacity="0.500" />
    <path d="M463 827L549 769Q550 787 567 789L481 847Q464 846 463 827Z" fill="url(#innerBend)" />
    <path d="M481 847L567 789L640 793L606 853H589Z" fill="#8d928b" />
    <ellipse cx="590" cy="834" rx="40" ry="30" fill="url(#smudge)" clipPath="url(#leftFloor)" />
    <path d="M624 690L650 657L710 660V779L624 837Z" fill="url(#legWall)" />
    <path d="M624 690Q628 657 650 657H672Z" fill="#696b66" />
    <path d="M624 837L710 779C710 791 707 800 701 806L615 864Z" fill="url(#under)" />
    <path d="M606 687C606 665 614 652 626 645L712 587C722 581 733 580 746 580L660 638Z" fill="#9aa098" />
    <path d="M660 638L746 580L872 589L786 647Z" fill="#929891" />
    <path d="M786 647L872 589C892 590 906 599 917 618L831 676C820 657 806 648 786 647Z" fill="url(#humpBend)" />
    <path d="M831 676L917 618L981 731L895 789Z" fill="url(#slope)" />
    <path d="M895 789L981 731Q986 741 996 742L910 800Q899 799 895 789Z" fill="#70736d" />
    <path d="M910 800L996 742L1190 754V818H1161Z" fill="url(#floorRight)" />
    <ellipse cx="1180" cy="796" rx="70" ry="24" fill="url(#smudge)" clipPath="url(#rightFloor)" />

    {/* outside surfaces */}
    <path d="M445 533L459 504L545 446C551 442 559 440 569 441L483 499Z" fill="#a3aaa2" />
    <path d="M483 499L569 441L1248 483L1162 541Z" fill="#a2a89f" />
    <path d="M1162 541L1248 483C1270 485 1282 501 1282 522L1196 580C1196 559 1184 543 1162 541Z" fill="url(#bend)" />
    <path d="M1196 580L1282 522V742L1196 800Z" fill="#8b8f87" />
    <path d="M1196 800L1282 741C1282 753 1280 762 1273 768L1187 826Z" fill="url(#underRight)" />

    <path d={OUTER + INNER} fillRule="evenodd" fill="#8e8b81" />

    {/* hidden edges */}
    <g fill="none" stroke="#2d2f2b" strokeOpacity="0.500" strokeWidth="1.100" strokeDasharray="14 4">
      <path d={OUTER + INNER} transform="translate(86 -58)" />
      <path d={CREASES} />
    </g>

    {/* visible edges */}
    <g fill="none" stroke="#161714" strokeWidth="1.300">
      <path d={OUTER + INNER} />
      <path d={EDGES} />
      <path d="M624 690L672 658M463 533L490 518M589 853L605 842M1161 816L1178 804" />
      <path d="M545 446C551 442 559 440 569 441L1248 483C1270 485 1282 501 1282 522V741C1282 753 1280 762 1273 768" />
      <path d="M549 522V769Q550 787 567 789L606 791" />
      <path d="M712 587C722 581 733 580 746 580L872 589C892 590 906 599 917 618L981 731Q986 741 996 742L1178 753" />
      <path d="M710 661V779C710 791 707 800 701 806" />
    </g>
    <path d="M459 504L545 446M626 645L712 587M615 864L701 806M1187 826L1273 768" stroke="#444" strokeDasharray="1 2" />
  </Canvas>
);

const CubeBox = styled.svg`
  position: absolute;
  top: 20px;
  right: 16px;
  font-family: 'Noto Sans', sans-serif;
  font-size: 16px;
`;

const ViewCube = () => (
  <CubeBox width="124" height="124" viewBox="1780 149 124 124">
    <path d="M1800 247L1862 254L1880 236L1887 250L1866 260L1812 254Z" fill="#000" opacity="0.200" filter="url(#soft)" />
    <path d="M1821 167V180" stroke="#3fe65a" strokeWidth="1.600" />
    <path d="M1797 184L1821 178L1875 181L1861 186Z" fill="#f4f4f4" />
    <path d="M1861 186L1875 181L1873 234L1861 253Z" fill="#dedede" />
    <path d="M1797 184L1861 186V253L1800 246Z" fill="#f0f0f1" />
    <path d="M1810 197L1849 199V239L1810 236Z" fill="#dcdee3" />
    <path d="M1797 184L1821 178L1875 181L1861 186ZM1797 184L1800 246L1861 253L1873 234L1875 181M1861 186V253M1869 205l-5 8 6 2-5 8" fill="none" stroke="#777" strokeDasharray="9 3" />
    <path d="M1872 236H1883" stroke="#ff8a8a" strokeWidth="1.800" />
    <path d="M1801 247L1793 252" stroke="#7b7bf5" strokeWidth="1.800" />
    <text x="1830" y="224" textAnchor="middle" fill="#8b929c" fontSize="14" fontWeight="700">FRONT</text>
    <g fontWeight="500" textAnchor="middle">
      <text x="1820" y="167" fill="#5ff07a">Y</text>
      <text x="1889" y="243" fill="#ff7070">X</text>
      <text x="1789" y="261" fill="#7b7bf5">Z</text>
    </g>
  </CubeBox>
);

/* ---------- data ---------- */

const menus = ['File', 'Edit', 'View', 'Window', 'Share', 'Help'];

const sections = [
  { name: 'SKETCH', width: 179, icons: [SketchIcon, LineIcon, RectIcon] },
  { name: 'CREATE', width: 122, icons: [ExtrudeIcon, FormIcon] },
  { name: 'MODIFY', width: 99, icons: [PressPullIcon] },
  { name: 'ASSEMBLE', width: 123, icons: [ComponentIcon, JointIcon] },
  { name: 'CONSTRUCT', width: 132, icons: [PlaneIcon] },
  { name: 'INSPECT', width: 98, icons: [MeasureIcon] },
  { name: 'INSERT', width: 92, icons: [PictureIcon] },
  { name: 'MAKE', width: 79, icons: [PrinterIcon] },
  { name: 'ADD-INS', width: 106, icons: [ScriptIcon] },
  { name: 'SELECT', width: 92, icons: [SelectIcon], active: true },
];

const SmallSketch = () => <SketchIcon size={21} plus={false} />;

const tree = [
  { name: 'Document Settings', level: 1, open: false, icon: Gear },
  { name: 'Named Views', level: 1, open: false, icon: Folder },
  { name: 'Origin', level: 1, open: true, bulb: 'off', icon: Folder },
  { name: 'O', level: 2, bulb: 'on', icon: OriginPoint },
  { name: 'X', level: 2, bulb: 'on', icon: Axis },
  { name: 'Y', level: 2, bulb: 'on', icon: Axis },
  { name: 'Z', level: 2, bulb: 'on', icon: Axis },
  { name: 'XY', level: 2, bulb: 'on', icon: PlaneGlyph },
  { name: 'XZ', level: 2, bulb: 'on', icon: PlaneGlyph },
  { name: 'YZ', level: 2, bulb: 'on', icon: PlaneGlyph },
  { name: 'Bodies', level: 1, open: false, bulb: 'on', icon: Folder },
  { name: 'Sketches', level: 1, open: true, bulb: 'on', icon: Folder },
  { name: 'Sketch1', level: 2, bulb: 'off', icon: SmallSketch },
];

const transport = [
  { name: 'Go to start', d: 'M1 1h3v18H1zM17 1v18L4 10z' },
  { name: 'Step back', d: 'M13 2v16L0 10zM14 6h3v8h-3z' },
  { name: 'Play', d: 'M1 0l16 10L1 20z' },
  { name: 'Step forward', d: 'M0 6h3v8H0zM5 2l13 8-13 8z' },
  { name: 'Go to end', d: 'M1 1l13 9-13 9zM14 1h3v18h-3z' },
];

const TreeRow = ({ item }) => {
  const Icon = item.icon;
  return (
    <Row $level={item.level}>
      <Toggle>{item.open === true ? <OpenArrow /> : item.open === false && <ClosedArrow />}</Toggle>
      <Chip>
        {item.bulb && <Bulb off={item.bulb === 'off'} />}
        <Icon />
        <span>{item.name}</span>
      </Chip>
    </Row>
  );
};

const App = () => (
  <Shell>
    <GlobalStyle />
    <Gradients />

    <MenuBar>
      <AppleIcon />
      <MenuItem $bold $gap={27}>Fusion 360</MenuItem>
      {menus.map((name, i) => <MenuItem key={name} $gap={i === 0 ? 28 : 25}>{name}</MenuItem>)}
      <Status>
        <CloudIcon />
        <TimeMachineIcon />
        <WifiIcon />
        <BatteryIcon />
        <time>Mon 11:21 AM</time>
        <SearchIcon />
        <StatusPair>
          <SiriIcon />
          Saba
          <ListIcon />
        </StatusPair>
      </Status>
    </MenuBar>

    <TitleBar>
      <Lights>
        <Light $color="#fc5b57" aria-label="Close" />
        <Light $color="#fdbc2e" aria-label="Minimize" />
        <Light $color="#27c83f" aria-label="Zoom" />
      </Lights>
      <span>Autodesk Fusion 360</span>
    </TitleBar>

    <AppBar>
      <BarButton $after={36} aria-label="Data panel"><AppsIcon /></BarButton>
      <BarButton $after={30} aria-label="File"><FileIcon /><Caret /></BarButton>
      <BarButton $after={31} aria-label="Save"><SaveIcon /></BarButton>
      <BarButton $after={17} aria-label="Undo"><UndoIcon /><Caret /></BarButton>
      <BarButton aria-label="Redo"><UndoIcon flip fill="#8b8b8b" /><Caret fill="#7d7d7d" /></BarButton>
      <Spacer />
      <BarButton $after={37} aria-label="Job status"><ClockIcon /></BarButton>
      <BarButton $after={31}>Saba G<Caret /></BarButton>
      <BarButton aria-label="Help"><HelpIcon /><Caret /></BarButton>
    </AppBar>

    <TabStrip>
      <Tab>
        <TabCubeIcon />
        <span>Bedroom ...able v2*</span>
        <TabDot />
        <button aria-label="Close tab">
          <svg width="14" height="20" viewBox="0 0 14 20"><path d="M1 6l12 12M13 6L1 18" stroke="#7d7d7d" strokeWidth="2.600" /></svg>
        </button>
      </Tab>
      <NewTab aria-label="New tab">
        <svg width="15" height="15" viewBox="0 0 15 15"><path d="M7.500 0v15M0 7.500h15" stroke="#7c7c84" strokeWidth="2.400" /></svg>
      </NewTab>
    </TabStrip>

    <Viewport>
      <Scene />
      <ViewCube />

      <Ribbon>
        <Workspace>
          <Grip $tall />
          <span>MODEL</span>
          <Caret fill="#fff" />
        </Workspace>
        {sections.map(({ name, width, icons, active }) => (
          <Section key={name} $width={width}>
            <Icons>
              {icons.map((Icon, i) => (
                <Tool key={i} $active={active} aria-label={`${name} tool ${i + 1}`}><Icon /></Tool>
              ))}
            </Icons>
            <Label>{name}<Caret /></Label>
          </Section>
        ))}
      </Ribbon>

      <Panel>
        <CollapseIcon />
        <h2>BROWSER</h2>
        <RoundSign />
        <Grip />
      </Panel>

      <Tree>
        <Row $level={0}>
          <Toggle><OpenArrow /></Toggle>
          <Chip $root>
            <Bulb />
            <Body />
            <span>Bedroom Side Table v2</span>
          </Chip>
          <Eye aria-label="Activate component"><EyeTarget /></Eye>
        </Row>
        {tree.map(item => <TreeRow key={item.name} item={item} />)}
      </Tree>

      <Dock>
        <Panel $bottom>
          <h2>COMMENTS</h2>
          <RoundSign plus />
          <Grip />
        </Panel>
        <NavGroups>
          <NavGroup>
            <NavButton $gap={7} aria-label="Orbit"><OrbitIcon /><Caret /></NavButton>
            <NavButton $after={11} aria-label="Look at"><LookAtIcon /></NavButton>
            <NavButton $after={9} aria-label="Pan"><HandIcon /></NavButton>
            <NavButton $after={9} aria-label="Zoom"><ZoomIcon /></NavButton>
            <NavButton $gap={8} aria-label="Fit"><ZoomIcon fit /><Caret /></NavButton>
          </NavGroup>
          <NavGroup>
            <NavButton $gap={4} $after={1} aria-label="Display settings"><DisplayIcon /><Caret /></NavButton>
            <NavButton $gap={4} $after={1} aria-label="Grid and snaps"><GridIcon /><Caret /></NavButton>
            <NavButton $gap={4} aria-label="Viewports"><PanesIcon /><Caret /></NavButton>
          </NavGroup>
        </NavGroups>
      </Dock>
    </Viewport>

    <Timeline>
      <Transport>
        {transport.map(({ name, d }) => (
          <button key={name} aria-label={name}><TransportIcon d={d} /></button>
        ))}
      </Transport>
      <HistoryGraph />
      <Spacer />
      <Settings aria-label="Timeline settings"><Gear /></Settings>
    </Timeline>

    <Commands>
      <RoundSign plus size={12} />
      TEXT COMMANDS
    </Commands>
  </Shell>
);

export default App;
